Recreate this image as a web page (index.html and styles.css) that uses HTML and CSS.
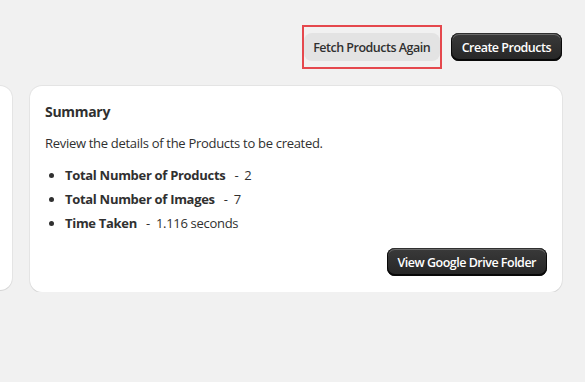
FILE: index.html
```html
<!DOCTYPE html>
<html lang="en">
<head>
  <meta charset="UTF-8">
  <meta name="viewport" content="width=device-width, initial-scale=1.0">
  <title>Product Import Summary</title>
  <link rel="stylesheet" href="styles.css">
</head>
<body>
  <div class="page">
    <div class="actions">
      <div class="highlight">
        <button class="btn btn-secondary">Fetch Products Again</button>
      </div>
      <button class="btn btn-primary">Create Products</button>
    </div>

    <div class="columns">
      <div class="card card-side"></div>

      <div class="card card-summary">
        <h2>Summary</h2>
        <p>Review the details of the Products to be created.</p>
        <ul class="stats">
          <li><strong>Total Number of Products</strong><span class="sep">-</span>2</li>
          <li><strong>Total Number of Images</strong><span class="sep">-</span>7</li>
          <li><strong>Time Taken</strong><span class="sep">-</span>1.116 seconds</li>
        </ul>
        <div class="card-footer">
          <button class="btn btn-primary">View Google Drive Folder</button>
        </div>
      </div>
    </div>
  </div>
</body>
</html>
```

FILE: styles.css
```css
body {
  font-family: 'Segoe UI', 'Open Sans', 'Noto Sans', sans-serif;
  margin: 0;
  background-color: #f1f1f1;
  color: #303030;
  font-size: 13px;
  letter-spacing: -0.3px;
}
.page {
  padding: 25px 23px 0 0;
}
.actions {
  display: flex;
  justify-content: flex-end;
  align-items: center;
  gap: 9px;
  height: 44px;
}
.highlight {
  border: 2px solid #e5484d;
  padding: 6px 0;
}
.btn {
  font-family: inherit;
  font-size: 12.5px;
  font-weight: 600;
  letter-spacing: -0.5px;
  white-space: nowrap;
  height: 28px;
  padding: 0 11px;
  border: none;
  border-radius: 8px;
  cursor: pointer;
}
.btn-secondary {
  background-color: #e3e3e3;
  color: #303030;
  width: 136px;
  padding: 0;
}
.btn-primary {
  background: linear-gradient(#3a3a3a, #262626);
  color: #fff;
  box-shadow: inset 0 -1px 0 1px rgba(0, 0, 0, 0.8), inset 0 0 0 1px #303030, inset 0 1px 0 1px rgba(255, 255, 255, 0.25);
}
.columns {
  display: flex;
  gap: 18px;
  margin-top: 17px;
}
.card {
  background-color: #fff;
  border-radius: 12px;
  box-shadow: 0 1px 0 rgba(26, 26, 26, 0.07), 0 0 0 1px rgba(0, 0, 0, 0.05);
}
.card-side {
  width: 12px;
  height: 204px;
  border-radius: 0 12px 12px 0;
}
.card-summary {
  flex: 1;
  padding: 16px 15px 16px 15px;
}
.card-summary h2 {
  font-size: 14px;
  font-weight: 700;
  line-height: 20px;
  margin: 0 0 11px;
}
.card-summary p {
  margin: 0;
  line-height: 20px;
}
.stats {
  margin: 12px 0 0;
  padding-left: 20px;
}
.stats li {
  line-height: 20px;
  margin-bottom: 4px;
}
.stats strong {
  font-weight: 700;
}
.sep {
  margin: 0 6px 0 9px;
}
.card-footer {
  display: flex;
  justify-content: flex-end;
  margin-top: 15px;
}
```
